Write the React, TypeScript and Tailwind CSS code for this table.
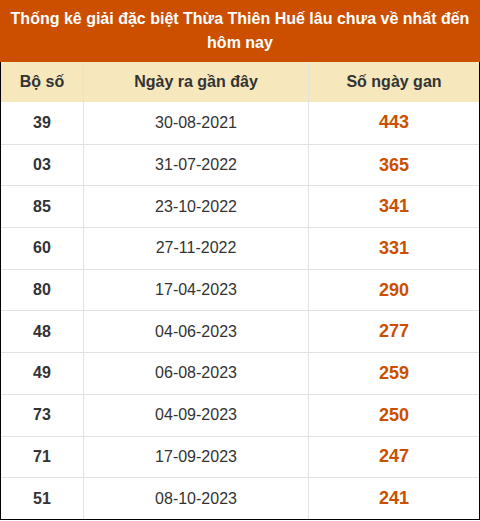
import React from "react";

const rows: [string, string, string][] = [
  ["39", "30-08-2021", "443"],
  ["03", "31-07-2022", "365"],
  ["85", "23-10-2022", "341"],
  ["60", "27-11-2022", "331"],
  ["80", "17-04-2023", "290"],
  ["48", "04-06-2023", "277"],
  ["49", "06-08-2023", "259"],
  ["73", "04-09-2023", "250"],
  ["71", "17-09-2023", "247"],
  ["51", "08-10-2023", "241"],
];

export default function App() {
  return (
    <div
      className="w-[480px] bg-white"
      style={{ fontFamily: '"Liberation Sans", Arial, sans-serif' }}
    >
      <div className="bg-[#cc4f00] text-white font-bold text-[16px] leading-[24px] text-center h-[62px] pt-[7px] px-2">
        Thống kê giải đặc biệt Thừa Thiên Huế lâu chưa về nhất đến hôm nay
      </div>
      <div className="border-l border-r border-b border-black">
        <div className="grid grid-cols-[83px_225px_1fr] bg-[#f6e7bd] h-[40px] text-[16px] font-bold text-[#333]">
          <div className="flex items-center justify-center border-r border-[#e2e2e2]">Bộ số</div>
          <div className="flex items-center justify-center border-r border-[#e2e2e2]">Ngày ra gần đây</div>
          <div className="flex items-center justify-center">Số ngày gan</div>
        </div>
        {rows.map(([a, b, c], i) => (
          <div
            key={a}
            className={`grid grid-cols-[83px_225px_1fr] h-[41.7px] text-[#333] ${i > 0 ? "border-t border-[#e2e2e2]" : ""}`}
          >
            <div className="flex items-center justify-center border-r border-[#e2e2e2] font-bold text-[16px]">{a}</div>
            <div className="flex items-center justify-center border-r border-[#e2e2e2] text-[16px]">{b}</div>
            <div className="flex items-center justify-center font-bold text-[18px] text-[#cc4f00]">{c}</div>
          </div>
        ))}
      </div>
    </div>
  );
}
